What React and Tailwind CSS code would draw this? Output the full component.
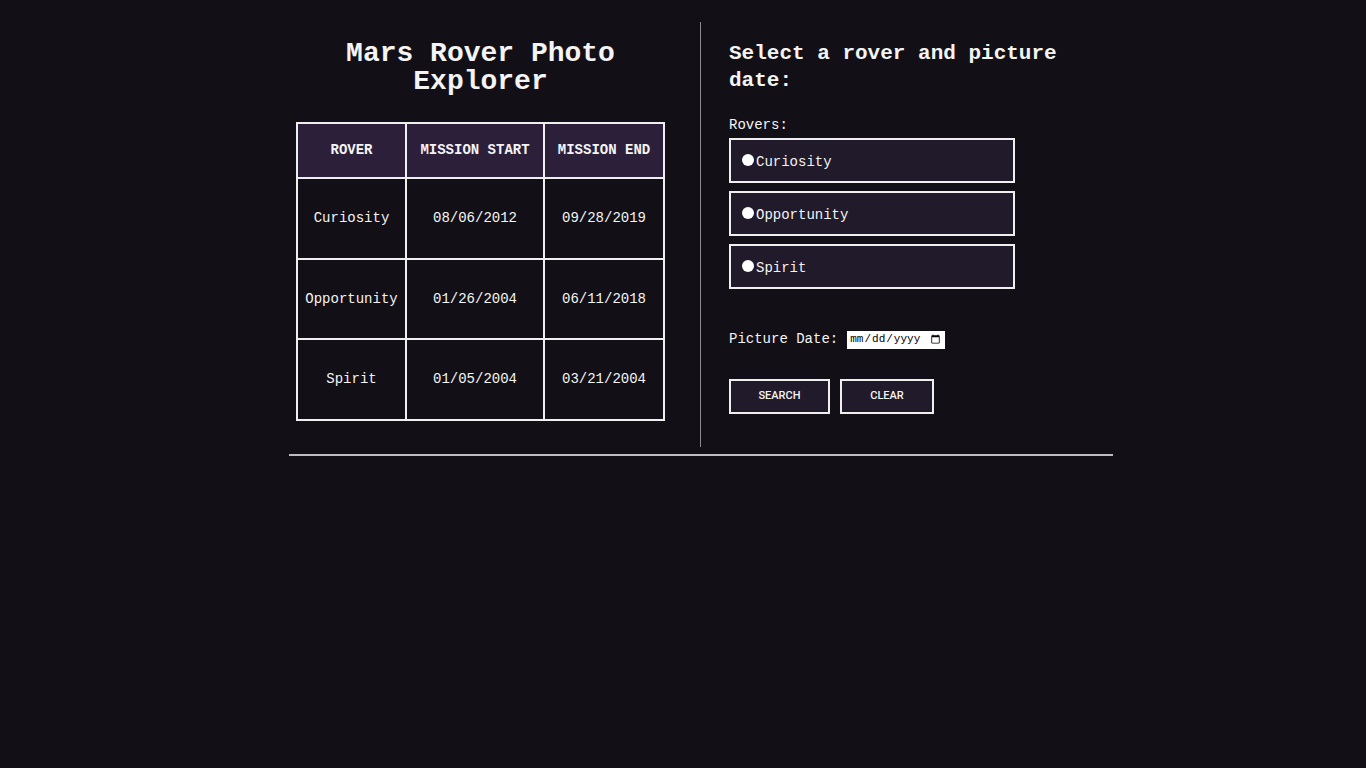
import React from "react";

const mono = { fontFamily: '"Liberation Mono", "DejaVu Sans Mono", monospace' };

const rows = [
  ["Curiosity", "08/06/2012", "09/28/2019"],
  ["Opportunity", "01/26/2004", "06/11/2018"],
  ["Spirit", "01/05/2004", "03/21/2004"],
];

export default function App() {
  return (
    <div className="min-h-[768px] w-full bg-[#121016] text-[#f4f4f4]" style={mono}>
      <div className="ml-[289px] w-[824px] pt-[22px]">
        <div className="flex">
          <div className="w-[412px] border-r border-[#8a8a8a] pl-[7px] pb-[26px]">
            <div className="w-[369px]">
              <h1 className="text-center text-[28px] leading-[28px] font-bold pt-[18px]">
                Mars Rover Photo Explorer
              </h1>
              <table className="mt-[26px] w-full border-collapse border-2 border-[#efefef] text-[14px]">
                <thead>
                  <tr className="h-[55px] bg-[#2c1f39]">
                    <th className="w-[109px] border-2 border-[#efefef] font-bold">ROVER</th>
                    <th className="w-[138px] border-2 border-[#efefef] font-bold">MISSION START</th>
                    <th className="border-2 border-[#efefef] font-bold">MISSION END</th>
                  </tr>
                </thead>
                <tbody>
                  {rows.map((r) => (
                    <tr key={r[0]} className="h-[80.7px]">
                      {r.map((c, i) => (
                        <td key={i} className="border-2 border-[#efefef] text-center">
                          {c}
                        </td>
                      ))}
                    </tr>
                  ))}
                </tbody>
              </table>
            </div>
          </div>
          <div className="w-[412px] pl-[28px] pt-[18px]">
            <h2 className="text-[21px] leading-[27px] font-bold w-[370px]">
              Select a rover and picture date:
            </h2>
            <div className="mt-[22px] text-[14px] leading-[18px]">Rovers:</div>
            <div className="mt-[4px] flex flex-col gap-[8px] w-[286px]">
              {["Curiosity", "Opportunity", "Spirit"].map((n) => (
                <label
                  key={n}
                  className="flex h-[45px] items-center border-2 border-[#efefef] bg-[#211a2b] pl-[11px] pt-[3px] text-[14px]"
                >
                  <span className="inline-block w-[12px] h-[12px] rounded-full bg-white mt-[-5px]" />
                  <span className="ml-[2px]">{n}</span>
                </label>
              ))}
            </div>
            <div className="mt-[40px] flex items-center text-[14px]">
              <span>Picture Date:</span>
              <input
                type="date"
                className="ml-[9px] h-[18px] w-[98px] bg-white text-black text-[11px] px-[2px]"
                style={{ colorScheme: "light" }}
              />
            </div>
            <div className="mt-[29px] flex gap-[10px]" style={{ fontFamily: 'Roboto, "Liberation Sans", sans-serif' }}>
              <button className="h-[35px] w-[101px] border-2 border-[#efefef] bg-[#211a2b] text-[11px] font-medium">
                SEARCH
              </button>
              <button className="h-[35px] w-[94px] border-2 border-[#efefef] bg-[#211a2b] text-[11px] font-medium">
                CLEAR
              </button>
            </div>
          </div>
        </div>
        <div className="mt-[7px] h-[2px] bg-[#bdbdbd]" />
      </div>
    </div>
  );
}
